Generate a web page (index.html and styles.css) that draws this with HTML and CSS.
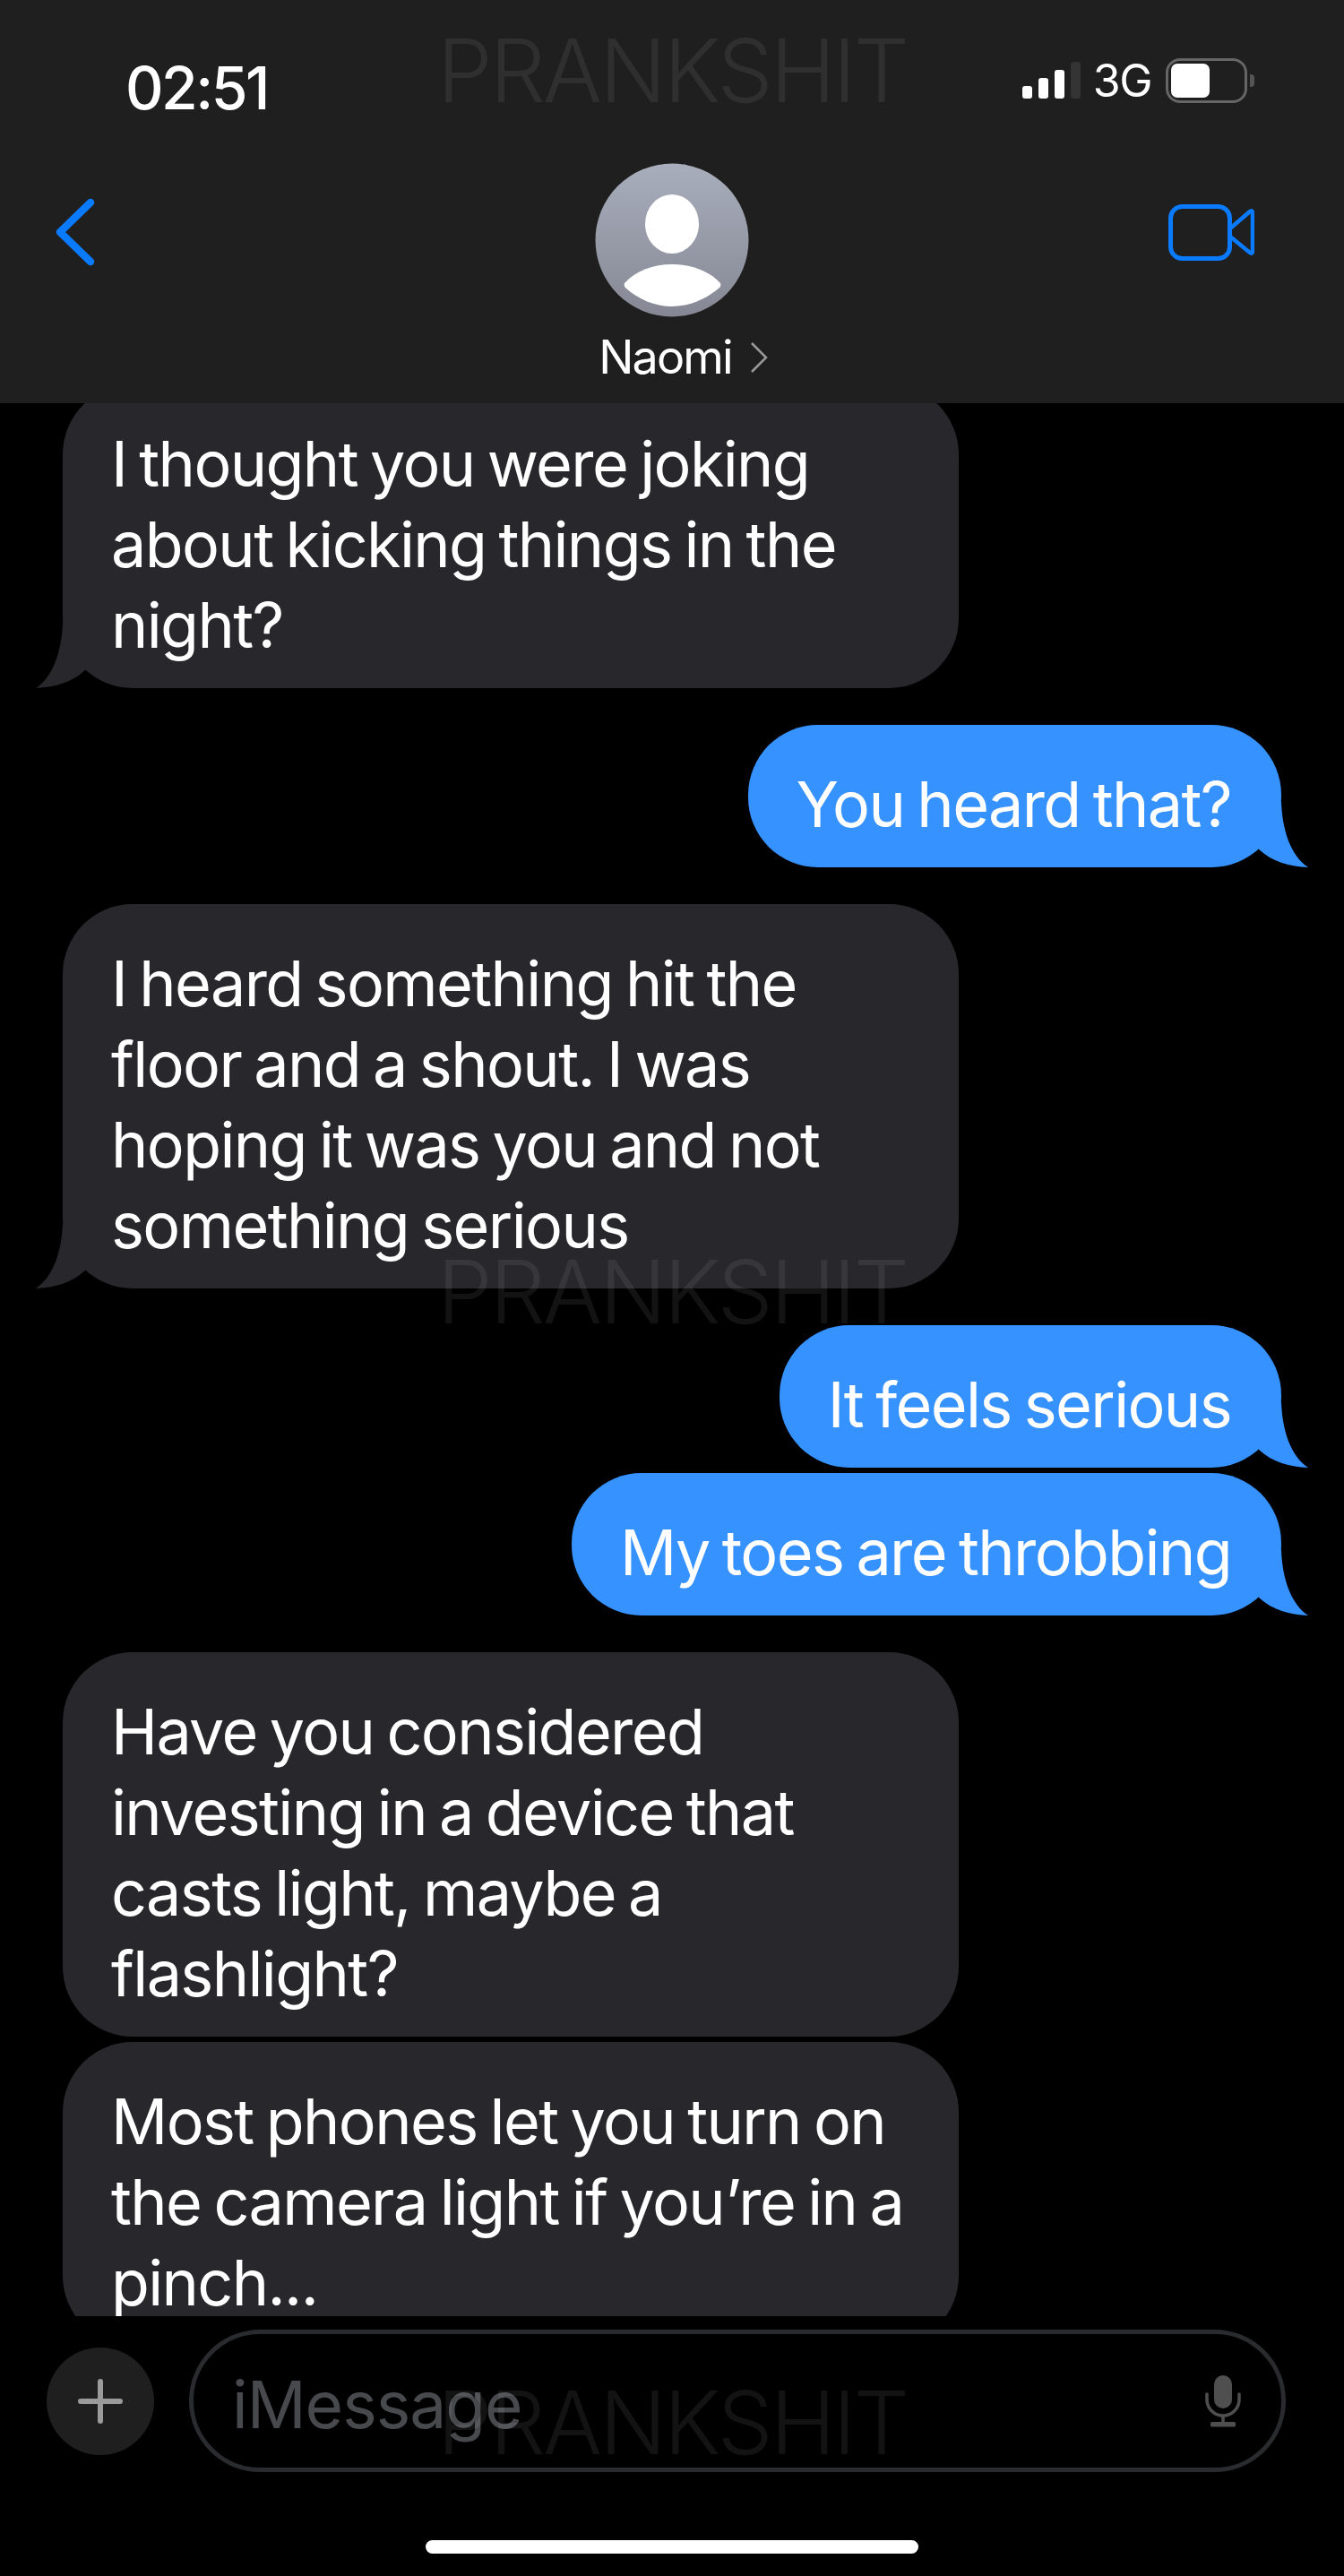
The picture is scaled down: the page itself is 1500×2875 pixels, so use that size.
FILE: index.html
```html
<!DOCTYPE html>
<html lang="en">
<head>
    <meta charset="UTF-8" />
    <meta name="viewport" content="width=device-width, initial-scale=1.0"/>
    <title>Naomi - Messages</title>
    <link rel="stylesheet" href="styles.css">
</head>
<body>

<svg class="defs" width="0" height="0">
    <symbol id="tail" viewBox="0 0 80 80">
        <path d="M30 5 C31 35 40 65 60 78 C40 77 20 72 5 58 L0 5 Z"/>
    </symbol>
</svg>

<!-- Header -->
<header class="topbar">
    <div class="status">
        <span class="time">02:51</span>
        <div class="status-right">
            <div class="signal">
                <span class="bar b1"></span>
                <span class="bar b2"></span>
                <span class="bar b3"></span>
                <span class="bar b4"></span>
            </div>
            <span class="network">3G</span>
            <div class="battery"><span class="battery-level"></span></div>
            <span class="battery-nub"></span>
        </div>
    </div>
    <div class="nav">
        <svg class="back" width="48" height="80" viewBox="0 0 48 80">
            <path d="M41 6 L7 39 L41 72" fill="none" stroke="#0a7aff" stroke-width="8.5" stroke-linecap="round" stroke-linejoin="round"/>
        </svg>
        <div class="contact">
            <svg class="avatar" width="172" height="172" viewBox="0 0 172 172">
                <defs>
                    <linearGradient id="avatarFill" x1="0" y1="0" x2="0" y2="1">
                        <stop offset="0" stop-color="#a9aebc"/>
                        <stop offset="1" stop-color="#858894"/>
                    </linearGradient>
                </defs>
                <circle cx="86" cy="86" r="85.5" fill="url(#avatarFill)"/>
                <ellipse cx="86" cy="68" rx="30" ry="33" fill="#fff"/>
                <path d="M33 134 C46 120 65 113 86 113 C107 113 127 120 140 134 Q141 137 139 139 C124 152 105 160 86 160 C67 160 48 152 34 139 Q32 137 33 134 Z" fill="#fff"/>
            </svg>
            <div class="contact-name">
                <span>Naomi</span>
                <svg width="20" height="36" viewBox="0 0 20 36">
                    <path d="M2 2 L18 18 L2 34" fill="none" stroke="#9a9a9a" stroke-width="2.5"/>
                </svg>
            </div>
        </div>
        <svg class="video" width="96" height="64" viewBox="0 0 96 64">
            <rect x="2.5" y="2.5" width="66" height="58" rx="13" fill="none" stroke="#0a7aff" stroke-width="5"/>
            <path d="M69 27 L91 8 Q94 6 94 10 L94 52 Q94 56 91 54 L69 36" fill="none" stroke="#0a7aff" stroke-width="4.5" stroke-linejoin="round"/>
        </svg>
    </div>
</header>

<!-- Messages -->
<main class="thread">
    <div class="bubble them">
        I thought you were joking<br>about kicking things in the<br>night?
        <svg class="tail"><use href="#tail"/></svg>
    </div>
    <div class="bubble me next-sender">
        You heard that?
        <svg class="tail"><use href="#tail"/></svg>
    </div>
    <div class="bubble them next-sender">
        I heard something hit the<br>floor and a shout. I was<br>hoping it was you and not<br>something serious
        <svg class="tail"><use href="#tail"/></svg>
    </div>
    <div class="bubble me next-sender">
        It feels serious
        <svg class="tail"><use href="#tail"/></svg>
    </div>
    <div class="bubble me">
        My toes are throbbing
        <svg class="tail"><use href="#tail"/></svg>
    </div>
    <div class="bubble them next-sender">
        Have you considered<br>investing in a device that<br>casts light, maybe a<br>flashlight?
    </div>
    <div class="bubble them">
        Most phones let you turn on<br>the camera light if you’re in a<br>pinch...
    </div>
</main>

<!-- Composer -->
<footer class="composer">
    <div class="input-row">
        <div class="plus">
            <svg width="50" height="50" viewBox="0 0 50 50">
                <path d="M25 3 V47 M3 25 H47" stroke="#9b9b9b" stroke-width="6" stroke-linecap="round"/>
            </svg>
        </div>
        <div class="field">
            <span class="placeholder">iMessage</span>
            <svg class="mic" width="40" height="58" viewBox="0 0 40 58">
                <rect x="10" y="0" width="20" height="37" rx="10" fill="#4f4f4f"/>
                <path d="M2 21 V27 C2 37 10 45 20 45 C30 45 38 37 38 27 V21" fill="none" stroke="#4f4f4f" stroke-width="3.5" stroke-linecap="round"/>
                <path d="M20 45 V53" stroke="#4f4f4f" stroke-width="3.5"/>
                <rect x="6" y="52" width="28" height="5.5" rx="1.5" fill="#4f4f4f"/>
            </svg>
        </div>
    </div>
    <div class="home-bar"></div>
</footer>

<!-- Watermarks sit over everything -->
<div class="watermark wm-top">PRANKSHIT</div>
<div class="watermark wm-mid">PRANKSHIT</div>
<div class="watermark wm-bottom">PRANKSHIT</div>

</body>
</html>
```

FILE: styles.css
```css
html, body {
    margin: 0;
    padding: 0;
}

body {
    width: 1500px;
    height: 2875px;
    position: relative;
    overflow: hidden;
    background: #000;
    color: #fff;
    font-family: Inter, "Liberation Sans", sans-serif;
}

.defs {
    display: block;
    height: 0;
}

/* Header */
.topbar {
    height: 450px;
    box-sizing: border-box;
    background: #1f1f1f;
    position: relative;
    z-index: 2;
    padding-top: 65px;
}

.status {
    display: flex;
    justify-content: space-between;
    align-items: flex-start;
    padding: 0 100px 0 140px;
    height: 115px;
}

.time {
    font-size: 66px;
    font-weight: 500;
    line-height: 66px;
    letter-spacing: -2.5px;
}

.status-right {
    display: flex;
    align-items: flex-start;
}

.signal {
    display: flex;
    align-items: flex-end;
    gap: 7px;
    height: 41px;
    margin-top: 4px;
}

.bar {
    width: 11px;
    background: #fff;
    border-radius: 3px;
}

.b1 { height: 14px; }
.b2 { height: 23px; }
.b3 { height: 32px; }
.b4 { height: 41px; background: #333; }

.network {
    font-size: 50px;
    line-height: 50px;
    margin-left: 14px;
    letter-spacing: -1.5px;
}

.battery {
    width: 91px;
    height: 50px;
    box-sizing: border-box;
    border: 3px solid #666;
    border-radius: 16px;
    margin-left: 16px;
    padding: 3px;
}

.battery-level {
    display: block;
    width: 43px;
    height: 38px;
    background: #fff;
    border-radius: 7px;
}

.battery-nub {
    width: 5px;
    height: 14px;
    margin: 18px 0 0 3px;
    background: #555;
    border-radius: 0 4px 4px 0;
}

.nav {
    display: grid;
    grid-template-columns: 1fr 172px 1fr;
    align-items: start;
    padding-top: 2px;
}

.back {
    margin: 38px 0 0 60px;
}

.video {
    justify-self: end;
    margin: 46px 100px 0 0;
}

.contact {
    display: flex;
    flex-direction: column;
    align-items: center;
}

.avatar {
    display: block;
    flex: none;
}

.contact-name {
    display: flex;
    align-items: center;
    gap: 20px;
    padding-left: 25px;
    font-size: 52px;
    line-height: 60px;
    letter-spacing: -1.8px;
    margin-top: 15px;
    white-space: nowrap;
}

/* Messages */
.thread {
    height: 2135px;
    overflow: hidden;
    display: flex;
    flex-direction: column;
    gap: 6px;
    padding: 0 70px;
    box-sizing: border-box;
}

.bubble {
    position: relative;
    box-sizing: border-box;
    padding: 44px 56px 25px 54px;
    border-radius: 78px;
    font-size: 70px;
    line-height: 90px;
    letter-spacing: -1.6px;
    word-spacing: -4px;
    white-space: nowrap;
    flex: none;
}

.bubble:first-child {
    margin-top: -21px;
}

.next-sender {
    margin-top: 35px;
}

.them {
    width: 1000px;
    background: #27272c;
    align-self: flex-start;
    fill: #27272c;
}

.me {
    background: #3692ff;
    align-self: flex-end;
    fill: #3692ff;
}

.tail {
    position: absolute;
    bottom: -2px;
    width: 80px;
    height: 80px;
}

.me .tail {
    right: -50px;
}

.them .tail {
    left: -50px;
    transform: scaleX(-1);
}

/* Composer */
.composer {
    height: 290px;
    position: relative;
}

.input-row {
    display: flex;
    align-items: center;
    gap: 39px;
    padding: 15px 65px 0 52px;
}

.plus {
    width: 120px;
    height: 120px;
    background: #201f1f;
    border-radius: 50%;
    display: flex;
    align-items: center;
    justify-content: center;
    flex: none;
}

.field {
    flex: 1;
    height: 159px;
    box-sizing: border-box;
    border: 5px solid #2a2b2e;
    border-radius: 80px;
    display: flex;
    align-items: center;
    justify-content: space-between;
    padding: 0 45px 0 43px;
}

.placeholder {
    font-size: 73px;
    letter-spacing: -1px;
    color: #48494d;
    margin-top: 7px;
}

.home-bar {
    width: 550px;
    height: 15px;
    background: #fff;
    border-radius: 8px;
    margin: 76px auto 0;
}

.watermark {
    position: absolute;
    z-index: 5;
    left: 488px;
    font-size: 98px;
    line-height: 100px;
    font-weight: 300;
    letter-spacing: -2.8px;
    color: rgba(255, 255, 255, 0.075);
    white-space: nowrap;
}

.wm-top { top: 29px; }
.wm-mid { top: 1392px; }
.wm-bottom { top: 2654px; }
```
